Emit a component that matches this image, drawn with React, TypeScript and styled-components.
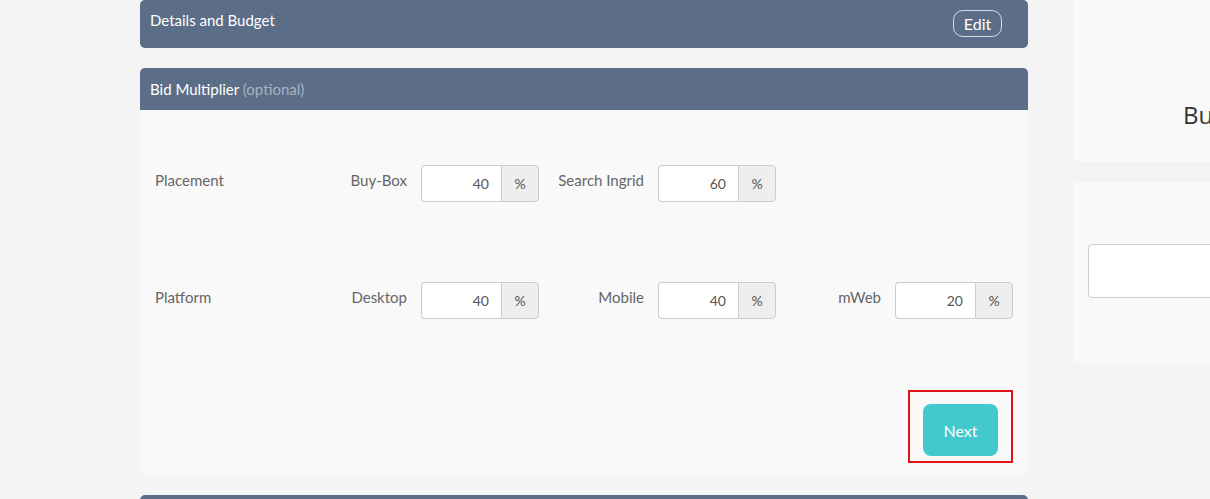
import React from "react";
import styled, { createGlobalStyle } from "styled-components";

const Global = createGlobalStyle`
  html, body { margin: 0; padding: 0; background: #f4f4f4; overflow: hidden; }
  body { font-family: Lato, "Open Sans", Arial, sans-serif; }
  * { box-sizing: border-box; }
`;

const Page = styled.div`
  display: flex;
  align-items: flex-start;
  gap: 45px;
  padding-left: 140px;
  width: 1600px;
  height: 499px;
  overflow: hidden;
`;

const Main = styled.div`
  width: 888px;
  flex: none;
  display: flex;
  flex-direction: column;
  gap: 20px;
`;

const Side = styled.div`
  width: 300px;
  flex: none;
  display: flex;
  flex-direction: column;
  gap: 20px;
  margin-top: -10px;
`;

const Card = styled.div`
  border-radius: 5px;
  overflow: hidden;
  background: #f9f9f9;
`;

const Header = styled.div<{ $h: number; $pt: number }>`
  background: #5b6d87;
  height: ${(p) => p.$h}px;
  padding: ${(p) => p.$pt}px 26px 0 10px;
  display: flex;
  justify-content: space-between;
  align-items: flex-start;
  color: #fff;
  font-size: 15px;
  line-height: 20px;
`;

const Muted = styled.span`
  color: #a7b2c2;
`;

const EditButton = styled.button`
  height: 27px;
  width: 49px;
  border: 1px solid rgba(255, 255, 255, 0.75);
  border-radius: 10px;
  background: transparent;
  color: #fff;
  font-family: inherit;
  font-size: 16px;
  padding: 0;
`;

const Body = styled.div`
  padding: 55px 15px 12px;
  display: flex;
  flex-direction: column;
`;

const Row = styled.div<{ $mb: number }>`
  display: grid;
  grid-template-columns: 147px 237px 237px 237px;
  align-items: flex-start;
  margin-bottom: ${(p) => p.$mb}px;
`;

const RowLabel = styled.div`
  color: #666;
  font-size: 15px;
  line-height: 20px;
  padding-top: 5px;
`;

const Field = styled.div`
  display: flex;
  align-items: flex-start;
  justify-content: flex-end;
  gap: 14px;
`;

const FieldLabel = styled.div`
  color: #666;
  font-size: 15px;
  line-height: 20px;
  padding-top: 5px;
  text-align: right;
  white-space: nowrap;
`;

const Group = styled.div`
  display: flex;
  width: 118px;
  height: 37px;
  flex: none;
`;

const Input = styled.input`
  width: 80px;
  height: 37px;
  border: 1px solid #ccc;
  border-right: none;
  border-radius: 4px 0 0 4px;
  background: #fff;
  text-align: right;
  padding: 0 12px 0 6px;
  font-family: inherit;
  font-size: 14px;
  color: #555;
  outline: none;
`;

const Addon = styled.div`
  width: 38px;
  height: 37px;
  border: 1px solid #ccc;
  border-radius: 0 4px 4px 0;
  background: #eee;
  color: #555;
  font-size: 14px;
  display: flex;
  align-items: center;
  justify-content: center;
`;

const Footer = styled.div`
  display: flex;
  justify-content: flex-end;
`;

const Highlight = styled.div`
  border: 2px solid #e0121a;
  padding: 12px 13px 5px 13px;
`;

const NextButton = styled.button`
  width: 75px;
  height: 52px;
  border: none;
  border-radius: 8px;
  background: #41c9cb;
  color: #fff;
  font-family: inherit;
  font-size: 16px;
`;

const SideCard = styled.div<{ $h: number }>`
  height: ${(p) => p.$h}px;
  background: #f9f9f9;
  border-radius: 5px;
`;

const BudgetTitle = styled.div`
  padding-top: 110px;
  text-align: center;
  font-size: 24px;
  line-height: 30px;
  color: #333;
  font-family: "Open Sans", Lato, sans-serif;
`;

const SideBody = styled.div`
  padding: 62px 15px 0;
`;

const SideInput = styled.div`
  height: 54px;
  background: #fff;
  border: 1px solid #ccc;
  border-radius: 4px;
`;

const NextHeader = styled.div`
  height: 30px;
  background: #5b6d87;
  border-radius: 5px 5px 0 0;
`;

const fields = (items: [string, string][]) =>
  items.map(([label, value]) => (
    <Field key={label}>
      <FieldLabel>{label}</FieldLabel>
      <Group>
        <Input defaultValue={value} />
        <Addon>%</Addon>
      </Group>
    </Field>
  ));

export default function App() {
  return (
    <>
      <Global />
      <Page>
        <Main>
          <Card>
            <Header $h={48} $pt={10}>
              <span>Details and Budget</span>
              <EditButton>Edit</EditButton>
            </Header>
          </Card>
          <Card>
            <Header $h={42} $pt={11}>
              <span>
                Bid Multiplier <Muted>(optional)</Muted>
              </span>
            </Header>
            <Body>
              <Row $mb={80}>
                <RowLabel>Placement</RowLabel>
                {fields([
                  ["Buy-Box", "40"],
                  ["Search Ingrid", "60"],
                ])}
              </Row>
              <Row $mb={71}>
                <RowLabel>Platform</RowLabel>
                {fields([
                  ["Desktop", "40"],
                  ["Mobile", "40"],
                  ["mWeb", "20"],
                ])}
              </Row>
              <Footer>
                <Highlight>
                  <NextButton>Next</NextButton>
                </Highlight>
              </Footer>
            </Body>
          </Card>
          <NextHeader />
        </Main>
        <Side>
          <SideCard $h={172}>
            <BudgetTitle>Budget</BudgetTitle>
          </SideCard>
          <SideCard $h={181}>
            <SideBody>
              <SideInput />
            </SideBody>
          </SideCard>
        </Side>
      </Page>
    </>
  );
}
